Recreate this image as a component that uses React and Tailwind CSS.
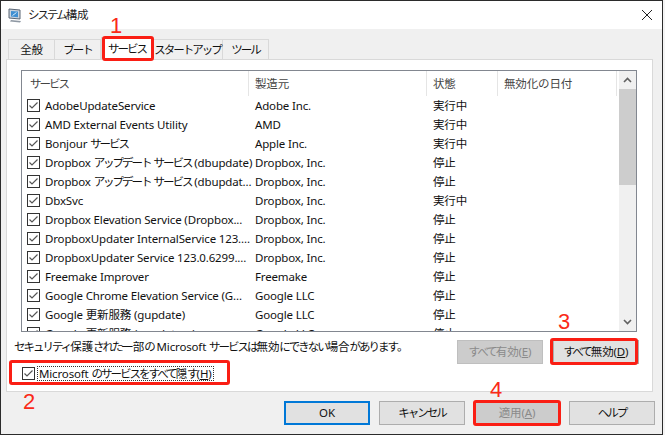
import React from 'react';

const services = [
  ['AdobeUpdateService', 'Adobe Inc.', '実行中'],
  ['AMD External Events Utility', 'AMD', '実行中'],
  ['Bonjour サービス', 'Apple Inc.', '実行中'],
  ['Dropbox アップデート サービス (dbupdate)', 'Dropbox, Inc.', '停止'],
  ['Dropbox アップデート サービス (dbupdat...', 'Dropbox, Inc.', '停止'],
  ['DbxSvc', 'Dropbox, Inc.', '実行中'],
  ['Dropbox Elevation Service (Dropbox...', 'Dropbox, Inc.', '停止'],
  ['DropboxUpdater InternalService 123....', 'Dropbox, Inc.', '停止'],
  ['DropboxUpdater Service 123.0.6299....', 'Dropbox, Inc.', '停止'],
  ['Freemake Improver', 'Freemake', '停止'],
  ['Google Chrome Elevation Service (G...', 'Google LLC', '停止'],
  ['Google 更新服務 (gupdate)', 'Google LLC', '停止'],
  ['Google 更新服務 (gupdatem)', 'Google LLC', '停止'],
];

// kana in the original font is much narrower than kanji
const Jp = ({ children }) =>
  children.split(/([\u3040-\u30ff]+)/).map((part, i) =>
    i % 2 ? <span key={i} className="tracking-[-2px]">{part}</span> : part
  );

const Check = () => (
  <svg width="13" height="13" viewBox="0 0 13 13" className="shrink-0">
    <rect x="0.5" y="0.5" width="12" height="12" fill="#fff" stroke="#333" />
    <path d="M2.5 6.5 L5 9 L10.5 3.5" fill="none" stroke="#555" strokeWidth="1.2" />
  </svg>
);

const AppIcon = () => (
  <svg width="14" height="15" viewBox="0 0 14 15">
    <path d="M1 1 L12 2 L12 11 L1 10 Z" fill="#c9d3de" stroke="#5a6675" />
    <path d="M3 3 L10 3.6 L10 9.2 L3 8.6 Z" fill="#3f8fd2" />
    <path d="M4.5 7.5 L8.5 4.5" stroke="#d8ecfa" strokeWidth="1" />
    <path d="M3 12 L13 13 L12 14.5 L2 13.5 Z" fill="#8f98a3" />
  </svg>
);

const Marker = ({ className }) => (
  <div className={`absolute z-20 border-[3px] border-[#fa1e14] rounded-[3px] pointer-events-none ${className}`} />
);

const Num = ({ className, children }) => (
  <div className={`absolute z-20 text-[#fa2a18] text-[22px] leading-none font-['Liberation_Sans',sans-serif] ${className}`}>{children}</div>
);

const Btn = ({ className = '', children }) => (
  <button className={`h-[24px] w-[86px] border flex items-center justify-center whitespace-nowrap ${className}`}>{children}</button>
);

const App = () => {
  return (
    <div className="relative w-[665px] h-[435px] bg-[#f4f4f4] overflow-hidden text-[11.5px] tracking-[-0.15px] text-[#111] font-['Noto_Sans','Noto_Sans_CJK_JP',sans-serif]">
      <div className="w-[663px] h-[435px] border border-[#2b2b2b] bg-[#f0f0f0] flex flex-col">
        {/* title bar */}
        <div className="h-[28px] bg-white flex items-center pl-[7px] shrink-0">
          <AppIcon />
          <span className="ml-[6px] text-[#222]"><Jp>システム</Jp>構成</span>
          <svg width="12" height="12" viewBox="0 0 12 12" className="ml-auto mr-[9px]">
            <path d="M1 1 L11 11 M11 1 L1 11" stroke="#222" strokeWidth="1" />
          </svg>
        </div>

        {/* tabs */}
        <div className="h-[30px] shrink-0 flex items-end pl-[7px] relative z-10">
          <div className="h-[20px] w-[47px] border border-b-0 border-[#d9d9d9] flex items-center justify-center">全般</div>
          <div className="h-[20px] w-[46px] border border-l-0 border-b-0 border-[#d9d9d9] flex items-center justify-center"><Jp>ブート</Jp></div>
          <div className="h-[23px] w-[52px] -mb-px bg-white border border-b-0 border-[#d9d9d9] flex items-center justify-center"><Jp>サービス</Jp></div>
          <div className="h-[20px] w-[70px] border border-l-0 border-b-0 border-[#d9d9d9] flex items-center justify-center whitespace-nowrap"><Jp>スタートアップ</Jp></div>
          <div className="h-[20px] w-[46px] border border-l-0 border-b-0 border-[#d9d9d9] flex items-center justify-center"><Jp>ツール</Jp></div>
        </div>

        {/* panel */}
        <div className="ml-[5px] w-[647px] h-[333px] shrink-0 bg-white border border-[#d9d9d9] px-[14px] pt-[10px]">
          <div className="w-[616px] h-[262px] border border-[#828790] flex overflow-hidden">
            <div className="flex-1 min-w-0 overflow-hidden">
              <div className="grid grid-cols-[227px_178px_71px_119px] h-[25px] text-[#444]">
                <div className="flex items-center pl-[8px] border-r border-[#e5e5e5]"><span><Jp>サービス</Jp></span></div>
                <div className="flex items-center pl-[6px] border-r border-[#e5e5e5]">製造元</div>
                <div className="flex items-center pl-[6px] border-r border-[#e5e5e5]">状態</div>
                <div className="flex items-center pl-[6px] border-r border-[#e5e5e5]">無効化の日付</div>
              </div>
              {services.map(([name, maker, status]) => (
                <div key={name} className="grid grid-cols-[227px_178px_71px_119px] h-[19px] items-center whitespace-nowrap">
                  <div className="flex items-center pl-[5px] gap-[5px] min-w-0">
                    <Check />
                    <span><Jp>{name}</Jp></span>
                  </div>
                  <div className="pl-[6px]">{maker}</div>
                  <div className="pl-[6px]">{status}</div>
                  <div />
                </div>
              ))}
            </div>
            {/* scrollbar */}
            <div className="w-[17px] shrink-0 bg-[#f0f0f0] flex flex-col">
              <div className="h-[18px] flex items-center justify-center">
                <svg width="9" height="6" viewBox="0 0 9 6"><path d="M1 5 L4.5 1.5 L8 5" fill="none" stroke="#606060" strokeWidth="1.6" /></svg>
              </div>
              <div className="h-[96px] bg-[#cdcdcd]" />
              <div className="flex-1" />
              <div className="h-[18px] flex items-center justify-center">
                <svg width="9" height="6" viewBox="0 0 9 6"><path d="M1 1 L4.5 4.5 L8 1" fill="none" stroke="#606060" strokeWidth="1.6" /></svg>
              </div>
            </div>
          </div>

          <div className="flex items-start mt-[8px] h-[24px]">
            <span className="-ml-[7px] -mt-[2px] whitespace-nowrap"><Jp>セキュリティ</Jp>保護<Jp>された</Jp>一部<Jp>の</Jp> Microsoft <Jp>サービスは</Jp>無効<Jp>にできない</Jp>場合<Jp>があります。</Jp></span>
            <Btn className="ml-auto bg-[#cccccc] border-[#bfbfbf] text-[#8a8a8a]"><Jp>すべて</Jp>有効(<u>E</u>)</Btn>
            <Btn className="ml-[10px] mr-[-1px] bg-[#e1e1e1] border-[#adadad]"><Jp>すべて</Jp>無効(<u>D</u>)</Btn>
          </div>

          <div className="flex items-center mt-[2px] ml-[1px]">
            <Check />
            <span className="ml-[2px] px-[1px] leading-[13px] border border-dotted border-[#333] whitespace-nowrap">Microsoft <Jp>のサービスをすべて</Jp>隠<Jp>す</Jp>(<u>H</u>)</span>
          </div>
        </div>

        {/* footer */}
        <div className="flex justify-end gap-[9px] mt-[9px] pr-[7px]">
          <Btn className="border-2 border-[#0078d7] bg-[#e1e1e1]">OK</Btn>
          <Btn className="bg-[#e1e1e1] border-[#adadad]"><Jp>キャンセル</Jp></Btn>
          <Btn className="bg-[#cccccc] border-[#bfbfbf] text-[#8a8a8a]">適用(<u>A</u>)</Btn>
          <Btn className="bg-[#e1e1e1] border-[#adadad]"><Jp>ヘルプ</Jp></Btn>
        </div>
      </div>

      {/* annotations */}
      <Marker className="left-[102px] top-[36px] w-[52px] h-[25px]" />
      <Marker className="left-[9px] top-[360px] w-[221px] h-[25px]" />
      <Marker className="left-[550px] top-[338px] w-[88px] h-[27px]" />
      <Marker className="left-[473px] top-[400px] w-[88px] h-[26px]" />
      <Num className="left-[110px] top-[15px]">1</Num>
      <Num className="left-[23px] top-[391px]">2</Num>
      <Num className="left-[558px] top-[311px]">3</Num>
      <Num className="left-[490px] top-[379px]">4</Num>
    </div>
  );
};

export default App;
